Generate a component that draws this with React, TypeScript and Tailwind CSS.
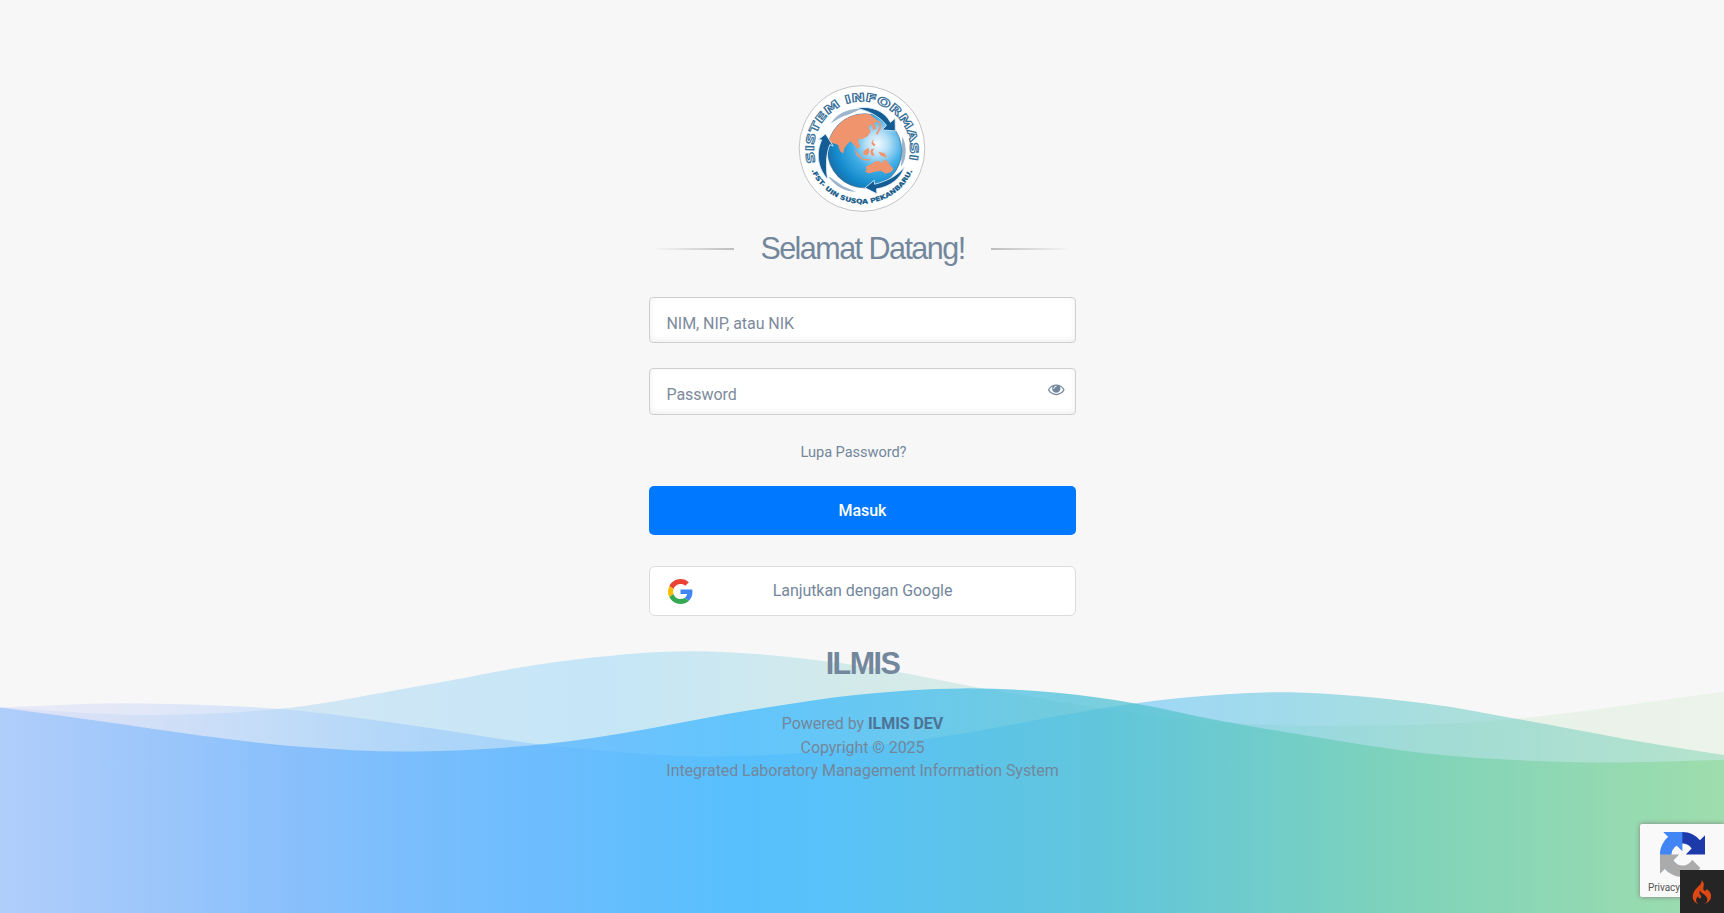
import React from "react";

type Point = [number, number];
type Stop = [number, string];

const WIDTH = 1724;
const BOTTOM = 913;

const backWave: Point[] = [
  [0, 707.5], [145, 715], [283, 708.4], [421, 685.7], [560, 661.4], [700, 651.2], [860, 665.7],
  [981, 688], [1096, 707.5], [1231, 722.8], [1354, 725.8], [1507, 719.7], [1724, 691.8],
];
const middleWave: Point[] = [
  [0, 707.5], [126, 703.2], [283, 709.3], [421, 726.7], [560, 746.7], [732, 756.3], [927, 738.9],
  [1096, 709.3], [1180, 698], [1288, 692.3], [1424, 703.2], [1526, 720.6], [1625, 738.9], [1724, 755],
];
const frontWave: Point[] = [
  [0, 707.5], [108, 722.3], [200, 735.4], [300, 746.7], [415, 751.5], [545, 744.1], [650, 728.4], [751, 710.1], [860, 694.5],
  [962, 688.4], [1057, 692.7], [1134, 703.2], [1215, 719.7], [1315, 737.1], [1424, 753.3], [1530, 760.7], [1621, 762.4], [1724, 759.8],
];

function wavePath(points: Point[]): string {
  let d = `M${points[0][0]} ${points[0][1]}`;
  for (let i = 0; i < points.length - 1; i++) {
    const before = points[Math.max(0, i - 1)];
    const from = points[i];
    const to = points[i + 1];
    const after = points[Math.min(points.length - 1, i + 2)];
    const third = (to[0] - from[0]) / 3;
    const slopeFrom = (to[1] - before[1]) / (to[0] - before[0]);
    const slopeTo = (after[1] - from[1]) / (after[0] - from[0]);
    d += `C${from[0] + third} ${from[1] + slopeFrom * third} ${to[0] - third} ${to[1] - slopeTo * third} ${to[0]} ${to[1]}`;
  }
  return `${d}V${BOTTOM}H0Z`;
}

const layers: { id: string; points: Point[]; opacity: number; stops: Stop[] }[] = [
  {
    id: "wave-back",
    points: backWave,
    opacity: 0.3,
    stops: [[0, "#b4c3f7"], [310, "#75bef0"], [600, "#50bef7"], [860, "#7fcbcb"], [1100, "#9dd9b7"], [1400, "#c4e5c0"], [1724, "#cfeacb"]],
  },
  {
    id: "wave-middle",
    points: middleWave,
    opacity: 0.5,
    stops: [[0, "#d9dcf7"], [126, "#cfd9f7"], [283, "#b0d1fb"], [421, "#92c5fb"], [740, "#72bffd"], [1150, "#49b9f3"], [1288, "#4bbfdd"], [1424, "#59c5c3"], [1724, "#80d3b0"]],
  },
  {
    id: "wave-front",
    points: frontWave,
    opacity: 0.75,
    stops: [[0, "#a1c7fb"], [300, "#75b6fd"], [560, "#57b5ff"], [740, "#3fb9ff"], [815, "#41bbfb"], [1100, "#50c1d6"], [1400, "#74d0b1"], [1724, "#97dba2"]],
  },
];

function Waves() {
  return (
    <svg className="absolute inset-0 h-full w-full" viewBox={`0 0 ${WIDTH} ${BOTTOM}`} preserveAspectRatio="none" aria-hidden="true">
      <defs>
        {layers.map((layer) => (
          <linearGradient key={layer.id} id={layer.id} gradientUnits="userSpaceOnUse" x1="0" y1="0" x2={WIDTH} y2="0">
            {layer.stops.map(([x, color]) => (
              <stop key={x} offset={x / WIDTH} stopColor={color} />
            ))}
          </linearGradient>
        ))}
      </defs>
      {layers.map((layer) => (
        <path key={layer.id} d={wavePath(layer.points)} fill={`url(#${layer.id})`} opacity={layer.opacity} />
      ))}
    </svg>
  );
}

function Emblem() {
  return (
    <svg className="h-[128px] w-[128px]" viewBox="53.5 44 387 387">
      <defs>
        <radialGradient id="ocean" gradientUnits="userSpaceOnUse" cx="293" cy="222" r="160">
          <stop offset="0" stopColor="#f4fbff" />
          <stop offset="0.22" stopColor="#b4def6" />
          <stop offset="0.48" stopColor="#41aee6" />
          <stop offset="0.8" stopColor="#1389cb" />
          <stop offset="1" stopColor="#1a6ba3" />
        </radialGradient>
        <path id="arc-top" d="M106.500 279 A146 146 0 1 1 387.500 279" />
        <path id="arc-bottom" d="M94 302 A167 167 0 0 0 402 298" />
        <clipPath id="globe-clip"><circle cx="255" cy="243" r="112" /></clipPath>
      </defs>
      <circle cx="247" cy="236" r="190" fill="#fff" stroke="#b5b7b9" strokeWidth="2.500" />
      <path d="M153 160 C172 130 205 114 246 116 L205 134 C182 140 170 150 153 160Z" fill="#9eb6cd" />
      <path d="M369 199 C384 230 382 270 365 291Z" fill="#9eb6cd" />
      <path d="M146 322 C165 349 195 367 229 367 L190 350 L150 322Z" fill="#9eb6cd" />
      <circle cx="255" cy="243" r="112" fill="url(#ocean)" stroke="#35658c" strokeWidth="2" />
      <g clipPath="url(#globe-clip)" fill="#f0946d">
        <path d="M140 200 L165 165 L205 130 L262 125 L290 148 L284 162 L291 175 L281 181 L276 163 L267 171 L273 186 L264 199 L245 209 L239 205 L235 215 L242 231 L233 237 L219 221 L211 214 L202 224 L194 235 L190 251 L181 244 L174 225 L159 220 L146 218Z" />
        <path d="M282 205 L275 220 L283 230 L288 224 L280 218Z M224 239 L238 255 L249 266 L244 267 L230 256Z M251 244 L266 234 L270 246 L263 257 L251 254Z M273 239 L285 236 L279 245 L285 257 L277 258 L273 251Z M297 246 L316 250 L322 264 L304 258Z M247 267 L270 268 L270 273 L248 271Z" />
        <path d="M258 291 L273 284 L287 275 L296 273 L307 280 L313 270 L321 272 L331 284 L342 297 L335 307 L319 312 L304 303 L285 306 L269 311 L257 307 L261 299Z" />
      </g>
      <path d="M276 163 L290 151 M291 151 L301 158 L302 174 L291 193" fill="none" stroke="#f0946d" strokeWidth="5" />
      <g fill="#145c94" stroke="#e4f2fb" strokeWidth="2.500">
        <path d="M230 114 C275 106 315 122 333 157 L347 145 L348 183 L308 180 L321 166 C301 139 268 122 230 114Z" />
        <path d="M143 329 C107 287 111 242 125 210 L115 209 L137 192 L160 229 L150 224 C138 252 137 290 143 329Z" />
        <path d="M375 292 C365 326 332 352 291 358 L292 373 L256 355 L284 332 L285 344 C324 334 353 319 375 292Z" />
      </g>
      <text fontSize="34" fontFamily="DejaVu Sans, sans-serif" fontWeight="700" fill="#fff" stroke="#3a7199" strokeWidth="3">
        <textPath href="#arc-top" textLength="530" lengthAdjust="spacingAndGlyphs">SISTEM INFORMASI</textPath>
      </text>
      <text fontSize="19" fontFamily="DejaVu Sans, sans-serif" fontWeight="700" fill="#155a8a" stroke="#155a8a" strokeWidth="0.800">
        <textPath href="#arc-bottom" textLength="386" lengthAdjust="spacingAndGlyphs">.FST- UIN SUSQA PEKANBARU.</textPath>
      </text>
    </svg>
  );
}

function EyeIcon() {
  return (
    <svg className="h-[16.500px] w-[16.500px]" viewBox="0 0 1792 1792" fill="currentColor">
      <path d="M1664 960q-152-236-381-353 61 104 61 225 0 185-131.500 316.500t-316.500 131.500-316.500-131.500-131.500-316.500q0-121 61-225-229 117-381 353 133 205 333.500 326.500t434.500 121.500 434.500-121.500 333.500-326.500zm-720-384q0-20-14-34t-34-14q-125 0-214.500 89.500t-89.500 214.500q0 20 14 34t34 14 34-14 14-34q0-86 61-147t147-61q20 0 34-14t14-34zm848 384q0 34-20 69-140 230-376.500 368.500t-499.500 138.500-499.500-139-376.500-368q-20-35-20-69t20-69q140-229 376.500-368t499.500-139 499.500 139 376.500 368q20 35 20 69z" />
    </svg>
  );
}

function GoogleIcon() {
  return (
    <svg className="h-[25px] w-[25px]" viewBox="0 0 48 48">
      <path fill="#EA4335" d="M24 9.500c3.540 0 6.710 1.220 9.210 3.600l6.850-6.850C35.900 2.380 30.470 0 24 0 14.620 0 6.510 5.380 2.560 13.220l7.980 6.190C12.430 13.720 17.740 9.500 24 9.500z" />
      <path fill="#4285F4" d="M46.980 24.550c0-1.570-.15-3.090-.38-4.550H24v9.020h12.940c-.58 2.960-2.260 5.480-4.780 7.180l7.730 6c4.510-4.180 7.090-10.360 7.090-17.650z" />
      <path fill="#FBBC05" d="M10.530 28.590c-.48-1.450-.76-2.990-.76-4.590s.27-3.140.76-4.590l-7.980-6.190C.92 16.460 0 20.120 0 24c0 3.880.92 7.540 2.560 10.780l7.970-6.190z" />
      <path fill="#34A853" d="M24 48c6.480 0 11.930-2.130 15.890-5.810l-7.730-6c-2.150 1.450-4.920 2.300-8.160 2.300-6.260 0-11.570-4.220-13.470-9.910l-7.980 6.190C6.510 42.620 14.620 48 24 48z" />
    </svg>
  );
}

function RecaptchaIcon() {
  return (
    <svg className="h-[45px] w-[45px]" viewBox="0 0 64 64">
      <path fill="#1c3aa9" d="M64 31.955l-.033-1.370V4.687l-7.160 7.160C50.948 4.674 42.033.093 32.050.093c-10.400 0-19.622 4.960-25.458 12.640l11.736 11.860a15.550 15.550 0 0 1 4.754-5.334c2.050-1.600 4.952-2.906 8.968-2.906.485 0 .86.057 1.135.163 4.976.393 9.288 3.140 11.828 7.124l-8.307 8.307L64 31.953" />
      <path fill="#4285f4" d="M31.862.094l-1.370.033H4.594l7.160 7.160C4.580 13.147 0 22.060 0 32.046c0 10.400 4.960 19.622 12.640 25.458L24.500 45.768a15.550 15.550 0 0 1-5.334-4.754c-1.600-2.050-2.906-4.952-2.906-8.968 0-.485.057-.86.163-1.135.393-4.976 3.140-9.288 7.124-11.828l8.307 8.307L31.860.095" />
      <path fill="#ababab" d="M.001 32.045l.033 1.370v25.898l7.160-7.160c5.860 7.173 14.774 11.754 24.760 11.754 10.400 0 19.622-4.960 25.458-12.640l-11.736-11.860a15.550 15.550 0 0 1-4.754 5.334c-2.050 1.600-4.952 2.906-8.968 2.906-.485 0-.86-.057-1.135-.163-4.976-.393-9.288-3.140-11.828-7.124l8.307-8.307c-10.522.040-22.400.066-27.295-.005" />
    </svg>
  );
}

function FlameIcon() {
  return (
    <svg className="h-[24px] w-[20px]" viewBox="0 0 155 200" fill="#dd4814">
      <path d="M73.700 3.700c2.200 7.900-.7 18.500-7.800 29-1.800 2.600-10.700 12.200-19.700 21.300-23.900 24-33.600 37.100-40.300 54.400-7.900 20.600-7.800 40.800.5 58.200C12.800 180 27.600 193 42.500 198l6 2-3-2.200c-21-15.200-22.900-38.700-4.800-58.800 2.500-2.700 4.800-5 5.100-5 .4 0 .7 2.700.7 6.100 0 5.700.2 6.200 3.700 9.500 3 2.700 4.600 3.400 7.800 3.400 5.600 0 9.900-2.400 11.600-6.500 2.900-6.900 1.600-12-5-20.500-10.500-13.400-11.700-23.300-4.300-34.700l3.100-4.800.7 4.700c1.300 8.200 5.800 12.900 25 25.800 20.900 14.100 30.600 26.100 32.800 40.500 1.100 7.200-.1 16.100-3.100 21.800-2.700 5.300-11.200 14.300-16.500 17.400-2.400 1.400-4.300 2.600-4.300 2.800 0 .2 2.400-.4 5.300-1.400 24.100-8.300 42.700-27.100 48.200-48.600 1.900-7.600 1.900-20.200-.1-28.500-3.500-15.200-14.600-30.500-29.900-41.200l-7-4.900-.6 3.300c-.8 4.800-2.600 7.600-5.900 9.300-4.500 2.300-10.300 1.900-13.800-1-6.700-5.700-7.800-14.600-3.700-30.500 3-11.600 3.200-20.600.5-29.100C88.300 18 80.600 6.300 74.800 2.200 73.100.9 73 1 73.700 3.700z" />
    </svg>
  );
}

const inputClass =
  "block w-full rounded-[4px] border border-[#cfcfcf] bg-white pl-[17px] pr-4 pt-[6px] text-[16px] tracking-[-0.06px] text-[#73879c] shadow-[inset_0_-2px_6px_rgba(0,0,0,0.07)] outline-none placeholder:text-[#7c8a9c] placeholder:opacity-100";

export default function App() {
  return (
    <div className="relative h-[913px] w-full overflow-hidden bg-[#f7f7f7] font-['Roboto',sans-serif] text-[16px] tracking-[-0.06px] text-[#73879c]">
      <Waves />
      <main className="relative mx-auto flex w-[427px] flex-col items-center pt-[85px]">
        <Emblem />
        <div className="mt-[20px] flex h-[32px] w-full items-center justify-between px-[4px]">
          <span className="h-[2px] w-[81px] bg-linear-to-l from-[#bdbec0] to-[#f7f7f7]" />
          <h1 className="whitespace-nowrap pb-[2px] pl-[1px] font-['Liberation_Sans',sans-serif] text-[30.5px] leading-[32px] tracking-[-1.53px]">Selamat Datang!</h1>
          <span className="h-[2px] w-[81px] bg-linear-to-r from-[#bdbec0] to-[#f7f7f7]" />
        </div>
        <form className="mt-[32px] flex w-full flex-col" onSubmit={(event) => event.preventDefault()}>
          <input className={`${inputClass} h-[46px]`} type="text" placeholder="NIM, NIP, atau NIK" />
          <div className="relative mt-[25px]">
            <input className={`${inputClass} h-[47px]`} type="password" placeholder="Password" />
            <button type="button" className="absolute right-[11px] top-[13px]" aria-label="Password">
              <EyeIcon />
            </button>
          </div>
          <a href="#" className="mt-[26px] self-center pr-[17px] text-[14.6px] leading-[22px]">Lupa Password?</a>
          <button type="submit" className="mt-[23px] h-[49px] w-full rounded-[5px] bg-[#0078ff] pl-[1px] text-[16px] font-medium text-white">Masuk</button>
          <button type="button" className="mt-[31px] flex h-[50px] w-full items-center rounded-[6px] border border-[#dcdcdc] bg-white pl-[18px] pr-[42px]">
            <GoogleIcon />
            <span className="flex-1 pb-[1px] text-center">Lanjutkan dengan Google</span>
          </button>
        </form>
        <h2 className="mt-[31px] pl-[1px] font-['Liberation_Sans',sans-serif] text-[30.5px] font-bold leading-[32px] tracking-[-1.53px]">ILMIS</h2>
        <p className="mt-[33px] pl-[1px] text-center leading-[23.5px]">
          Powered by <strong className="font-bold text-[#4d7396]">ILMIS DEV</strong>
          <br />
          Copyright © 2025
          <br />
          <span className="whitespace-nowrap">Integrated Laboratory Management Information System</span>
        </p>
      </main>
      <div className="absolute bottom-[16px] right-0 h-[73px] w-[84px] rounded-l-[2px] bg-[#f9f9f9] pl-[20px] pt-[8px] shadow-[0_0_5px_gray]">
        <RecaptchaIcon />
        <span className="-ml-[12px] mt-[4px] block whitespace-nowrap text-[10px] leading-[14px] text-[#555]">Privacy</span>
      </div>
      <div className="absolute bottom-0 right-0 flex h-[43px] w-[44px] items-center justify-center bg-[#252525]">
        <FlameIcon />
      </div>
    </div>
  );
}
